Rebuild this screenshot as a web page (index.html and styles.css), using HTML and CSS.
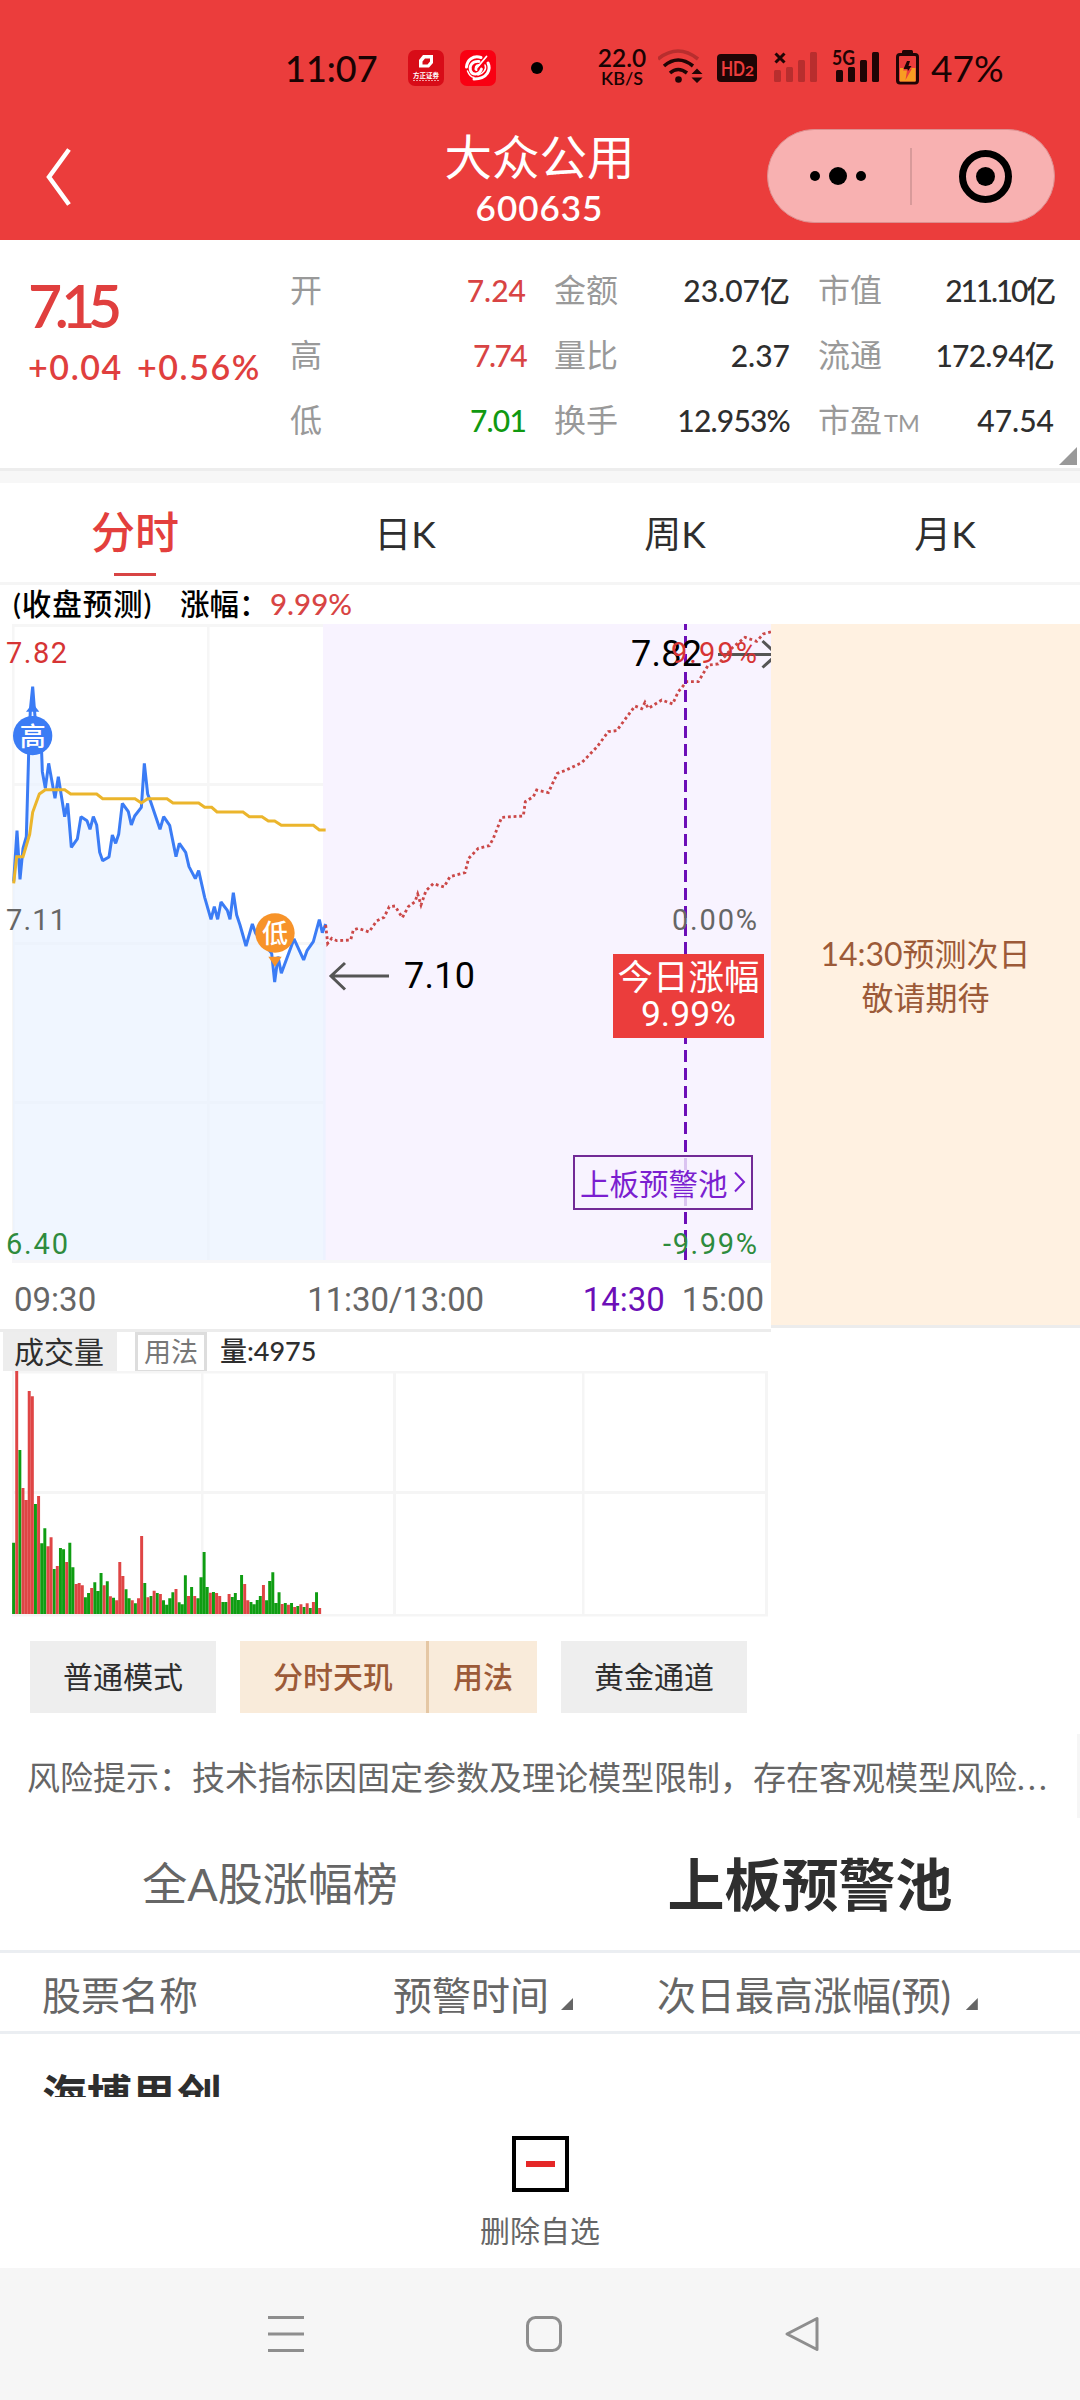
FILE: index.html
```html
<!DOCTYPE html>
<html lang="zh-CN">
<head>
<meta charset="utf-8">
<title>大众公用 600635</title>
<link rel="stylesheet" href="styles.css">
</head>
<body>
<header class="header">
  <div class="status">
    <span class="clock">11:07</span>
    <svg class="app-icon" width="36" height="36" viewBox="0 0 36 36">
      <rect width="36" height="36" rx="7" fill="#d80c18"/>
      <path d="M15 5H25V13L21 17.500H11V10Z M17 8.500L14.500 11.500V14.500H19.500L22 11.500V8.500Z" fill="#fff" fill-rule="evenodd"/>
      <text x="18" y="28" font-size="6.500" font-weight="700" fill="#fff" text-anchor="middle" textLength="26">方正证券</text>
      <path d="M5 30.500H31" stroke="#fff" stroke-opacity=".6" stroke-width="1" stroke-dasharray="2 1"/>
    </svg>
    <svg class="app-icon-2" width="36" height="36" viewBox="0 0 36 36">
      <rect width="36" height="36" rx="7" fill="#f90012"/>
      <g fill="none" stroke="#fff" stroke-linecap="round">
        <path d="M21 7.500C13 5 7 10 6.500 17" stroke-width="3"/>
        <path d="M7.500 21C9 25 11 27 14 27.500" stroke-width="1.500"/>
        <path d="M19 11.500C12 11 9 16 10.500 20.500C12 25 19 26 21.500 19" stroke-width="2.800"/>
        <path d="M26.500 6.500L15.500 19.500" stroke-width="1.800"/>
        <path d="M19 15C16 15 14.500 18 16.500 20" stroke-width="2"/>
        <path d="M28 13C31 19 28 29 14 29" stroke-width="3"/>
        <path d="M25 15C27 19 23 24 18 25" stroke-width="1.500"/>
      </g>
    </svg>
    <i class="dot"></i>
    <span class="speed"><b>22.0</b><em>KB/S</em></span>
    <svg class="status-icons" width="264" height="56" viewBox="658 40 264 56">
      <g fill="none" stroke="#1f0505" stroke-width="3.600">
        <path d="M658 59Q678 43 698 59" stroke-opacity=".25"/>
        <path d="M664 66Q678 54 693 66"/>
        <path d="M670 73Q678 66 687 73"/>
      </g>
      <circle cx="678.500" cy="79.500" r="3.300" fill="#1f0505"/>
      <path d="M697 68.500L702.500 74H691.500ZM697 83L702.500 77.500H691.500Z" fill="#1f0505"/>
      <rect x="717" y="54" width="40" height="28" rx="4" fill="#1f0505"/>
      <text x="721" y="76" font-size="21" font-weight="700" fill="#eb3d3c" textLength="24" lengthAdjust="spacingAndGlyphs">HD</text>
      <text x="745" y="76" font-size="13" font-weight="700" fill="#eb3d3c" textLength="9" lengthAdjust="spacingAndGlyphs">2</text>
      <path d="M775.500 53.500L784.500 62.500M784.500 53.500L775.500 62.500" stroke="#1f0505" stroke-width="3"/>
      <g fill="#1f0505" fill-opacity=".25">
        <rect x="774" y="70" width="7" height="12" rx="1.500"/><rect x="786" y="67" width="7" height="15" rx="1.500"/><rect x="798" y="60" width="7" height="22" rx="1.500"/><rect x="810" y="52" width="7" height="30" rx="1.500"/>
      </g>
      <g fill="#1f0505">
        <rect x="836" y="70" width="7" height="12" rx="1.500"/><rect x="848" y="67" width="7" height="15" rx="1.500"/><rect x="860" y="60" width="7" height="22" rx="1.500"/><rect x="872" y="52" width="7" height="30" rx="1.500"/>
        <text x="832" y="64.500" font-size="20" font-weight="700" textLength="23" lengthAdjust="spacingAndGlyphs">5G</text>
      </g>
      <rect x="902" y="50" width="11" height="5" rx="1.500" fill="#1f0505"/>
      <rect x="897.500" y="54.500" width="20" height="28.500" rx="2.500" fill="none" stroke="#1f0505" stroke-width="3"/>
      <rect x="900" y="68" width="15.500" height="13.500" fill="#f89c22"/>
      <path d="M908.500 61L903 70.500H907L905.500 80L912 68.500H908.500Z" fill="#eb3d3c"/>
      <path d="M907 61H910L908.500 66H911.500L908 71L907.500 69H903.500Z" fill="#1f0505"/>
    </svg>
    <span class="battery">47%</span>
  </div>
  <div class="titlebar">
    <svg class="back" width="30" height="60" viewBox="0 0 30 60"><path d="M25 2.500L5 30L25 57.500" fill="none" stroke="#fff" stroke-width="4.500"/></svg>
    <div class="title"><h1>大众公用</h1><p>600635</p></div>
    <div class="capsule">
      <svg width="286" height="92" viewBox="768 130 286 92">
        <circle cx="815" cy="176" r="5"/><circle cx="838" cy="176" r="9"/><circle cx="861" cy="176" r="5"/>
        <path d="M911 148V205" stroke="#d89a9a" stroke-width="2"/>
        <circle cx="985.500" cy="176.500" r="23" fill="none" stroke="#000" stroke-width="7"/><circle cx="985.500" cy="176.500" r="9.500"/>
      </svg>
    </div>
  </div>
</header>

<section class="quote">
  <div class="price"><strong>7.15</strong><div class="change"><span>+0.04</span><span>+0.56%</span></div></div>
  <dl><div><dt>开</dt><dd class="up">7.24</dd></div><div><dt>高</dt><dd class="up tight">7.74</dd></div><div><dt>低</dt><dd class="down snug">7.01</dd></div></dl>
  <dl><div><dt>金额</dt><dd>23.07亿</dd></div><div><dt>量比</dt><dd>2.37</dd></div><div><dt>换手</dt><dd class="snug">12.953%</dd></div></dl>
  <dl><div><dt>市值</dt><dd class="narrow">211.10亿</dd></div><div><dt>流通</dt><dd class="snug">172.94亿</dd></div><div><dt>市盈<small>TM</small></dt><dd>47.54</dd></div></dl>
  <i class="corner"></i>
</section>

<nav class="periods"><a class="on">分时</a><a>日K</a><a>周K</a><a>月K</a></nav>
<p class="forecast"><span class="fc-name">(收盘预测)</span><span class="fc-label">涨幅：</span><b>9.99%</b></p>

<div class="main-chart">
  <div class="plot">
    <svg class="minute" width="771" height="639" viewBox="0 624 771 639">
      <g fill="#f6f6f6">
        <rect x="12" y="624" width="759" height="3"/><rect x="12" y="624" width="2.500" height="639"/><rect x="207" y="624" width="2.500" height="639"/>
        <rect x="12" y="783" width="759" height="3"/><rect x="12" y="942" width="759" height="3"/><rect x="12" y="1101" width="759" height="3"/>
      </g>
      <rect x="323" y="624" width="448" height="636" fill="#f8f3ff"/>
      <rect x="12" y="1260" width="759" height="3" fill="#f6f6f8"/>
      <g transform="translate(0 620) scale(.33333)" fill="none">
        <path d="M39 1920V785L51 632L60 778L69 685L79 650L86 400L91 270L98 200L105 290L118 320L125 400L127 455L136 505L146 430L165 535L175 470L194 590L203 550L214 682L232 657L243 590L261 602L270 628L280 590L290 615L299 697L308 722L327 711L337 645L347 670L356 643L367 550L385 575L394 615L404 588L424 562L433 430L443 522L452 545L480 628L491 590L509 616L528 710L538 670L557 697L567 740L586 776L596 752L614 832L633 898L643 860L653 898L663 846L682 871L690 898L700 818L710 885L720 915L738 978L757 912L767 940L815 1000L824 1086L834 1010L844 1060L882 957L911 1020L921 992L940 965L958 899L967 938L977 912V1920Z" fill="#e7f0ff" fill-opacity=".62"/>
        <path d="M41 785L51 632L60 778L69 685L79 650L86 400L91 270L98 200L105 290L118 320L125 400L127 455L136 505L146 430L165 535L175 470L194 590L203 550L214 682L232 657L243 590L261 602L270 628L280 590L290 615L299 697L308 722L327 711L337 645L347 670L356 643L367 550L385 575L394 615L404 588L424 562L433 430L443 522L452 545L480 628L491 590L509 616L528 710L538 670L557 697L567 740L586 776L596 752L614 832L633 898L643 860L653 898L663 846L682 871L690 898L700 818L710 885L720 915L738 978L757 912L767 940L815 1000L824 1086L834 1010L844 1060L882 957L911 1020L921 992L940 965L958 899L967 938L977 912" stroke="#3b7cf5" stroke-width="9" stroke-linejoin="bevel"/>
        <path d="M41 790L50 710H69L89 643L98 577L118 522L136 509H194L212 522H290L308 536H405L424 549L443 536H501L519 549H596L614 562H635L651 576H729L748 590H786L805 603H824L844 616H940L958 630H977" stroke="#ebb52c" stroke-width="9"/>
        <path d="M977 915L983 970L995 955L1010 962L1052 960L1060 930L1075 925L1107 936L1130 903L1152 892L1168 860L1185 858L1207 893L1225 860L1245 845L1253 822L1263 855L1278 812L1300 791L1332 801L1350 770L1395 758L1406 715L1435 685L1468 677L1480 655L1505 592L1570 588L1576 545L1600 530L1610 510L1645 518L1672 460L1695 452L1745 428L1790 382L1825 335L1850 332L1905 258L1925 266L1935 247L1945 265L1985 240L2018 252L2035 215L2060 185L2095 185L2125 135L2155 132L2195 85L2235 52L2270 64L2290 42L2315 35" stroke="#cb4848" stroke-width="8.500" stroke-dasharray="8.500 8.500"/>
        <path d="M78 275L98 250L118 275Z" fill="#3b7cf5"/><circle cx="98" cy="347" r="59" fill="#3b7cf5"/>
        <path d="M805 1010H845L825 1040Z" fill="#f79329"/><circle cx="825" cy="939" r="59" fill="#f79329"/>
      </g>
      <g font-size="26" font-weight="500" fill="#fff" text-anchor="middle"><text x="32.700" y="745.500">高</text><text x="275" y="943">低</text></g>
      <path d="M685.500 618V1260" stroke="#6c0eb7" stroke-width="3" stroke-dasharray="12 6"/>
      <g fill="none" stroke="#555" stroke-width="3"><path d="M331 976H389M345 963L331 976L345 989.500"/><path d="M718 654.500H775M762.500 641L777 654.500L762.500 667.500"/></g>
      <g class="num">
        <g font-size="36" fill="#000"><text x="631" y="666" textLength="71">7.82</text><text x="404" y="988" textLength="71">7.10</text></g>
        <g font-size="29"><text x="6" y="663" fill="#d63434" textLength="61">7.82</text><text x="6" y="930" fill="#666" textLength="60">7.11</text><text x="6" y="1254" fill="#2e8b3d" textLength="62">6.40</text></g>
        <g font-size="29"><text x="671" y="663" fill="#d63434" textLength="86">9.99%</text><text x="672" y="930" fill="#666" textLength="85">0.00%</text><text x="663" y="1254" fill="#2e8b3d" textLength="94">-9.99%</text></g>
      </g>
    </svg>
    <div class="today"><span>今日涨幅</span><b>9.99%</b></div>
    <a class="pool">上板预警池<svg width="13" height="22" viewBox="0 0 13 22"><path d="M2 1.500L11 11L2 20.500" fill="none" stroke="#7b1fd0" stroke-width="2"/></svg></a>
    <div class="axis"><span>09:30</span><span>11:30/13:00</span><span class="mark">14:30</span><span>15:00</span></div>
  </div>
  <div class="tomorrow">14:30预测次日<br>敬请期待</div>
</div>

<div class="vol-head"><span class="vol-name">成交量</span><span class="vol-help">用法</span><span class="vol-value">量:4975</span></div>
<svg class="volume" width="771" height="246" viewBox="0 0 771 246">
  <g fill="#f5f5f5"><rect x="12" width="756" height="2.500"/><rect x="12" y="120" width="756" height="3"/><rect x="12" y="243" width="756" height="2.500"/><rect x="12" width="2" height="245"/><rect x="201" width="2.500" height="245"/><rect x="393" width="3" height="245"/><rect x="582" width="2.500" height="245"/><rect x="765" width="3" height="245"/></g>
  <g transform="translate(13.600 0) scale(3.123 .33333)" stroke-width=".95">
    <path stroke="#0f9d12" d="M0 729V515M2 729V237M7 729V399M9 729V517M10 729V472M13 729V594M15 729V531M16 729V535M18 729V515M19 729V589M23 729V679M24 729V666M26 729V634M27 729V660M28 729V606M30 729V631M32 729V680M36 729V655M37 729V682M39 729V697M42 729V636M44 729V675M46 729V666M48 729V688M49 729V701M50 729V682M51 729V664M53 729V694M54 729V700M55 729V613M57 729V648M59 729V682M60 729V619M61 729V543M62 729V648M64 729V663M67 729V693M68 729V693M70 729V678M71 729V666M72 729V687M73 729V612M76 729V693M77 729V700M78 729V687M79 729V675M81 729V688M82 729V630M83 729V604M84 729V696M85 729V664M87 729V696M89 729V696M91 729V705M93 729V708M95 729V711M97 729V664"/>
    <path stroke="#df4545" d="M1 729V0M3 729V351M4 729V387M5 729V60M6 729V76M8 729V375M11 729V526M12 729V499M14 729V585M17 729V573M20 729V639M21 729V636M22 729V643M25 729V651M29 729V643M31 729V676M33 729V688M34 729V573M35 729V615M38 729V688M40 729V682M41 729V495M43 729V679M45 729V659M47 729V669M52 729V654M56 729V675M58 729V675M63 729V665M65 729V666M66 729V675M69 729V669M74 729V639M75 729V688M80 729V642M86 729V699M88 729V701M90 729V708M92 729V700M94 729V697M96 729V693M98 729V711"/>
  </g>
</svg>

<div class="modes"><a class="mode">普通模式</a><div class="pair"><a>分时天玑</a><a>用法</a></div><a class="mode">黄金通道</a></div>
<p class="risk">风险提示：技术指标因固定参数及理论模型限制，存在客观模型风险<span>...</span></p>
<nav class="boards"><a>全A股涨幅榜</a><a class="on">上板预警池</a></nav>
<div class="thead"><span>股票名称</span><span>预警时间<i></i></span><span>次日最高涨幅(预)<i></i></span></div>
<div class="trow">海博思创</div>
<div class="action"><i class="minus"></i><span>删除自选</span></div>
<footer class="sysnav">
  <svg width="36" height="36" viewBox="0 0 36 36"><path d="M0 1.500H36M0 18H36M0 34.500H36"/></svg>
  <svg width="36" height="36" viewBox="0 0 36 36"><rect x="1.500" y="1.500" width="33" height="33" rx="8"/></svg>
  <svg width="36" height="36" viewBox="0 0 36 36"><path d="M33 2.500V33.500L3 18Z" stroke-linejoin="round"/></svg>
</footer>
</body>
</html>
```
FILE: styles.css
```css
* { box-sizing: border-box; margin: 0; padding: 0; }
body { width: 1080px; height: 2400px; overflow: hidden; background: #fff; color: #2e2e2e; font-family: Lato, "Noto Sans CJK SC", sans-serif; }
svg { display: block; flex: none; }
span, b, strong, a, dt, dd { white-space: nowrap; }
i, em { font-style: normal; }
.num, .axis, .today b { font-family: Roboto, "Noto Sans CJK SC", sans-serif; }

.header { height: 240px; background: #eb3d3c; }
.status { display: flex; align-items: center; height: 118px; padding: 18px 0 0 285px; color: #180303; }
.clock { width: 123px; font-size: 36px; font-weight: 500; line-height: 40px; }
.app-icon-2 { margin-left: 12px; }
.app-icon { margin-right: 4px; }
.dot { width: 12px; height: 12px; margin-left: 35px; border-radius: 50%; background: #000; }
.speed { display: flex; flex-direction: column; align-items: center; width: 60px; margin: 0 0 0 49px; }
.speed b { font-size: 24.500px; font-weight: 600; line-height: 20px; }
.speed em { font-size: 18px; font-weight: 600; line-height: 20px; }
.status-icons { margin-left: 6px; }
.battery { margin-left: 9px; font-size: 37px; font-weight: 400; line-height: 40px; }
.titlebar { display: flex; align-items: flex-start; height: 122px; padding: 11px 25px 0 44px; color: #fff; }
.back { margin-top: 18px; }
.title { display: flex; flex-direction: column; align-items: center; flex: 1; padding-left: 238px; }
.title h1 { font-size: 47.500px; font-weight: 400; line-height: 56px; white-space: nowrap; }
.title p { font-size: 35px; font-weight: 600; line-height: 44px; letter-spacing: 1px; }
.capsule { flex: none; width: 288px; height: 94px; border: 1px solid #dd8f8f; border-radius: 47px; background: #f8b1b1; }

.quote { position: relative; display: flex; gap: 28px; height: 243px; padding: 18px 26px 0 28px; border-bottom: 12px solid #f7f7f7; box-shadow: inset 0 -3px #ededed; }
.price { display: flex; flex-direction: column; width: 234px; color: #e03f3e; padding-top: 18px; }
.price strong { font-size: 59px; font-weight: 600; line-height: 60px; letter-spacing: -7.500px; }
.change { display: flex; gap: 14px; font-size: 34px; font-weight: 600; line-height: 62px; letter-spacing: 1.600px; }
.quote dl { width: 236px; line-height: 64px; }
.quote dl div { display: flex; justify-content: space-between; height: 65px; }
.quote dt { font-size: 32px; color: #999; font-weight: 400; }
.quote dt small { margin-left: 2px; font-size: 23.500px; font-weight: 400; }
.quote dd { font-size: 30px; font-weight: 500; }
.quote .up { color: #d84444; }
.quote .down { color: #119911; }
.quote .snug { letter-spacing: -.8px; }
.quote .tight { letter-spacing: -1.600px; }
.quote .narrow { letter-spacing: -2.200px; }
.corner { position: absolute; right: 3px; bottom: 6px; width: 18px; height: 18px; background: #999; clip-path: polygon(100% 0, 100% 100%, 0 100%); }

.periods { display: flex; height: 102px; border-bottom: 3px solid #f5f5f5; }
.periods a { display: flex; flex-direction: column; align-items: center; flex: 1; font-size: 37px; line-height: 102px; }
.periods .on { font-size: 44px; font-weight: 500; color: #e33f3d; line-height: 99px; }
.periods .on::after { content: ""; width: 42px; height: 3px; margin-top: -9px; background: #d84444; }
.forecast { display: flex; height: 39px; padding-left: 13px; color: #000; font-size: 29.500px; font-weight: 500; line-height: 38px; }
.fc-name { width: 167px; letter-spacing: .9px; }
.fc-label { width: 90px; }
.forecast b { color: #d84444; font-weight: 500; }

.main-chart { display: flex; height: 708px; }
.plot { position: relative; width: 771px; border-bottom: 3px solid #ececec; }
.today { position: absolute; left: 613px; top: 330px; width: 151px; height: 84px; padding-top: 3px; background: #eb3d3c; color: #fff; text-align: center; font-size: 35.500px; line-height: 40px; }
.today span { display: block; }
.today b { display: block; font-weight: 400; line-height: 34px; letter-spacing: 0; }
.pool { position: absolute; left: 573px; top: 531px; width: 180px; height: 55px; display: flex; align-items: center; gap: 5px; padding: 0 0 2px 5px; border: 2px solid #722a96; background: rgba(248, 243, 255, .8); color: #7b1fd0; font-size: 29.500px; }
.axis { display: flex; align-items: center; height: 66px; padding: 6px 7px 0 14px; font-size: 33px; color: #666; }
.axis span:nth-child(2) { margin-left: 211px; letter-spacing: -.1px; }
.axis .mark { margin-left: auto; margin-right: 17px; color: #6c0eb7; }
.tomorrow { width: 309px; height: 704px; padding-top: 308px; border-bottom: 3px solid #ececec; background: #fff1e1; color: #9c5a38; text-align: center; font-size: 32px; line-height: 44px; }

.vol-head { display: flex; height: 39px; padding-left: 3px; line-height: 38px; }
.vol-name { width: 114px; padding-left: 11px; background: #ededed; font-size: 30px; }
.vol-help { width: 72px; margin-left: 18px; border: 3px solid #ddd; border-bottom-width: 1px; font-size: 27px; line-height: 34px; text-align: center; color: #777; }
.vol-value { margin-left: 13px; font-size: 27px; font-weight: 500; }

.modes { display: flex; gap: 24px; height: 96px; padding: 24px 0 0 30px; line-height: 70px; font-size: 30px; }
.modes a { text-align: center; }
.mode { width: 186px; background: #eee; }
.pair { display: flex; width: 297px; background: #f9ebda; color: #9c5a38; font-weight: 500; }
.pair a:first-child { width: 189px; border-right: 3px solid #e5c7a4; }
.pair a:last-child { flex: 1; }
.risk { height: 84px; margin: 21px 0 0; padding-left: 27px; border-right: 3px solid #f6f6f6; color: #666; font-size: 33px; line-height: 86px; white-space: nowrap; }
.risk span { letter-spacing: 3.200px; }
.boards { display: flex; height: 135px; border-bottom: 3px solid #ebeef2; line-height: 132px; }
.boards a { flex: 1; text-align: center; font-size: 45px; color: #666; }
.boards .on { font-size: 57px; font-weight: 600; color: #2f2f2f; }
.thead { display: flex; height: 81px; padding-left: 42px; border-bottom: 3px solid #ebeef2; color: #666; font-size: 39px; line-height: 84px; }
.thead span:nth-child(1) { width: 351px; }
.thead span:nth-child(2) { width: 264px; }
.thead i { display: inline-block; width: 12px; height: 12px; margin-left: 12px; background: #666; clip-path: polygon(100% 0, 100% 100%, 0 100%); }
.thead span:nth-child(3) i { margin-left: 15px; }
.trow { height: 63px; padding: 29px 0 0 42px; overflow: hidden; font-size: 45px; font-weight: 600; line-height: 66px; }
.action { display: flex; flex-direction: column; align-items: center; height: 171px; padding-top: 39px; background: #fff; color: #666; font-size: 30px; line-height: 76px; }
.minus { display: flex; align-items: center; justify-content: center; width: 57px; height: 57px; border: 4px solid #000; }
.minus::after { content: ""; width: 29px; height: 6px; background: #e52828; }
.sysnav { display: flex; gap: 222px; height: 132px; padding: 48px 0 0 268px; background: #f6f6f6; }
.sysnav svg { fill: none; stroke: #8e8e8e; stroke-width: 3; }
```
